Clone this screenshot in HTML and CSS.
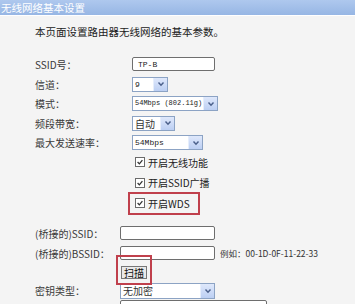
FILE: index.html
```html
<!DOCTYPE html>
<html lang="zh-CN">
<head>
  <meta charset="UTF-8" />
  <title>无线网络基本设置</title>
  <link rel="stylesheet" href="styles.css">
</head>
<body>

<div class="title-bar">无线网络基本设置</div>

<div class="content">
  <p class="intro">本页面设置路由器无线网络的基本参数。</p>

  <div class="form top">
    <label>SSID号：</label>
    <div><span class="text-box w83 mono">TP-B</span></div>

    <label>信道：</label>
    <div>
      <span class="select w36"><span class="val mono">9</span><span class="arrow"><svg viewBox="0 0 10 10"><path d="M2.5 3.5 L5 6.3 L7.5 3.5"/></svg></span></span>
    </div>

    <label>模式：</label>
    <div>
      <span class="select w86"><span class="val mono small">54Mbps (802.11g)</span><span class="arrow"><svg viewBox="0 0 10 10"><path d="M2.5 3.5 L5 6.3 L7.5 3.5"/></svg></span></span>
    </div>

    <label>频段带宽：</label>
    <div>
      <span class="select w43"><span class="val">自动</span><span class="arrow"><svg viewBox="0 0 10 10"><path d="M2.5 3.5 L5 6.3 L7.5 3.5"/></svg></span></span>
    </div>

    <label>最大发送速率：</label>
    <div>
      <span class="select w71"><span class="val mono">54Mbps</span><span class="arrow"><svg viewBox="0 0 10 10"><path d="M2.5 3.5 L5 6.3 L7.5 3.5"/></svg></span></span>
    </div>

    <span></span>
    <div class="check-row"><span class="check"><svg viewBox="0 0 10 10"><path d="M2 5 L4.2 7.3 L8 2.6"/></svg></span>开启无线功能</div>

    <span></span>
    <div class="check-row"><span class="check"><svg viewBox="0 0 10 10"><path d="M2 5 L4.2 7.3 L8 2.6"/></svg></span>开启SSID广播</div>

    <span></span>
    <div><span class="check-row marked"><span class="check"><svg viewBox="0 0 10 10"><path d="M2 5 L4.2 7.3 L8 2.6"/></svg></span>开启WDS</span></div>
  </div>

  <div class="form bottom">
    <label>(桥接的)SSID：</label>
    <div><span class="text-box w95"></span></div>

    <label>(桥接的)BSSID：</label>
    <div class="with-hint"><span class="text-box w95"></span><span class="hint">例如：00-1D-0F-11-22-33</span></div>

    <span></span>
    <div><span class="btn-wrap"><button class="btn">扫描</button></span></div>

    <label>密钥类型：</label>
    <div>
      <span class="select w95 tall"><span class="val">无加密</span><span class="arrow"><svg viewBox="0 0 10 10"><path d="M2.5 3.5 L5 6.3 L7.5 3.5"/></svg></span></span>
    </div>

    <span></span>
    <div class="peek-row"><span class="text-box w147"></span></div>
  </div>
</div>

</body>
</html>
```

FILE: styles.css
```css
body {
  margin: 0;
  background-color: #f4f4f4;
  color: #333;
  font-family: "Noto Sans CJK SC", "Noto Sans", sans-serif;
  font-size: 10px;
  height: 304px;
  overflow: hidden;
}

.title-bar {
  height: 15px;
  line-height: 15px;
  padding-left: 1px;
  color: #fff;
  font-size: 10.5px;
  background: linear-gradient(#aec8ee, #97b6e4);
  border-bottom: 1px solid #fff;
}

.content {
  padding-left: 35px;
}

.intro {
  margin: 8px 0 0;
  line-height: 15px;
  font-size: 10.5px;
  color: #222;
}

.form {
  display: grid;
  align-items: center;
}

.form label {
  color: #3a3a3a;
  white-space: nowrap;
}

.form > div {
  display: flex;
  align-items: center;
}

.form > .peek-row {
  align-self: start;
}

.top {
  margin-top: 15px;
  grid-template-columns: 97px auto;
  grid-template-rows: 20px 20px 19px 20px 19px 20px 21px 20px;
}

.bottom {
  margin-top: 10px;
  grid-template-columns: 85px auto;
  grid-template-rows: 20px 20px 18px 19px 16px;
}

.mono {
  font-family: "Liberation Mono", monospace;
  font-size: 8px;
  color: #222;
}

.mono.small {
  font-size: 7px;
}

.text-box {
  display: inline-flex;
  align-items: center;
  box-sizing: border-box;
  height: 14px;
  padding-left: 5px;
  background: #fff;
  border: 1px solid #6e6e6e;
  border-radius: 2px;
}

.select {
  display: inline-flex;
  box-sizing: border-box;
  height: 15px;
  background: #fff;
  border: 1px solid #8ca3c4;
}

.select.tall {
  height: 16px;
}

.select .val {
  flex: 1;
  display: flex;
  align-items: center;
  padding-left: 2px;
  white-space: nowrap;
  overflow: hidden;
  line-height: 13px;
}

.select .arrow {
  width: 13px;
  flex: none;
  display: flex;
  align-items: center;
  justify-content: center;
  background: linear-gradient(#dfe8fb, #bccff3);
  border-left: 1px solid #e6eefc;
}

.select .arrow svg {
  width: 10px;
  height: 10px;
  fill: none;
  stroke: #4a5f8a;
  stroke-width: 1.4;
}

.w36 { width: 36px; }
.w43 { width: 43px; }
.w71 { width: 71px; }
.w83 { width: 83px; }
.w86 { width: 86px; }
.w95 { width: 95px; }
.w147 { width: 147px; }

.check-row {
  display: inline-flex;
  align-items: center;
  padding-left: 3px;
  color: #222;
}

.check {
  display: inline-flex;
  width: 10px;
  height: 10px;
  box-sizing: border-box;
  margin-right: 3px;
  background: #fff;
  border: 1px solid #6a6a6a;
}

.check svg {
  width: 8px;
  height: 8px;
  fill: none;
  stroke: #333;
  stroke-width: 1.6;
}

.marked {
  margin-left: -4px;
  padding: 2px 8px 2px 5px;
  border: 2px solid #c0404c;
}

.with-hint {
  gap: 5px;
}

.hint {
  font-size: 8.5px;
  color: #333;
  white-space: nowrap;
}

.btn-wrap {
  position: relative;
  display: inline-block;
}

.btn-wrap::after {
  content: "";
  position: absolute;
  left: -4px;
  top: -11px;
  width: 32px;
  height: 26px;
  border: 2px solid #c0404c;
}

.btn {
  display: block;
  height: 13px;
  padding: 0 2px;
  margin-left: 1px;
  font-family: "Noto Sans CJK SC", sans-serif;
  font-size: 10px;
  line-height: 11px;
  color: #111;
  background: #e9e9e9;
  border: 1px solid #777;
}
```
